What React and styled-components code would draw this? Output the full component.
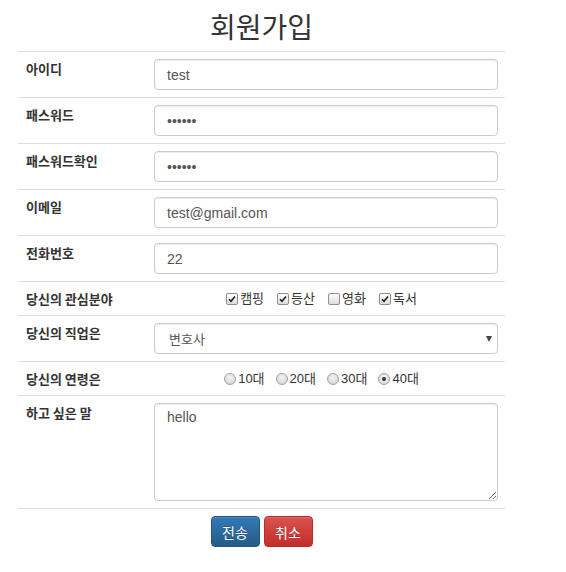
import React from "react";
import styled, { createGlobalStyle } from "styled-components";

const GlobalStyle = createGlobalStyle`
  body {
    margin: 0;
    background: #fff;
    color: #333;
    font-family: "Liberation Sans", "Noto Sans CJK KR", sans-serif;
    font-size: 14px;
  }
`;

const Page = styled.div`
  width: 487px;
  padding-left: 18px;
`;

const Title = styled.h2`
  margin: 0;
  height: 51px;
  padding-top: 3px;
  box-sizing: border-box;
  text-align: center;
  font-family: "Noto Sans CJK KR", sans-serif;
  font-weight: 400;
  font-size: 28px;
  line-height: 46px;
  color: #333;
`;

const Table = styled.table`
  width: 487px;
  border-collapse: collapse;
  border-spacing: 0;
  border-bottom: 1px solid #ddd;
`;

const Row = styled.tr`
  border-top: 1px solid #ddd;
`;

const Head = styled.th`
  width: 112px;
  padding: 7px 8px;
  text-align: left;
  vertical-align: top;
  font-family: "Noto Sans CJK KR", sans-serif;
  font-size: 13px;
  font-weight: 700;
  line-height: 19px;
  color: #333;
`;

const Cell = styled.td`
  padding: 7px 7px 7px 8px;
  vertical-align: top;
  text-align: ${(p) => (p.$center ? "center" : "left")};
`;

const fieldBase = `
  display: block;
  width: 100%;
  box-sizing: border-box;
  border: 1px solid #ccc;
  border-radius: 4px;
  box-shadow: inset 0 1px 1px rgba(0, 0, 0, 0.075);
  background: #fff;
  color: #555;
  font-family: "Liberation Sans", "Noto Sans CJK KR", sans-serif;
  font-size: 14px;
  outline: none;
  margin: 0;
`;

const Input = styled.input`
  ${fieldBase}
  height: 31px;
  padding: 0 12px;
  line-height: 20px;
`;

const SelectWrap = styled.div`
  position: relative;
`;

const Select = styled.select`
  ${fieldBase}
  height: 31px;
  padding: 0 12px 0 14px;
  appearance: none;
  -webkit-appearance: none;
  font-family: "Noto Sans CJK KR", sans-serif;
  font-size: 13px;
`;

const Caret = styled.span`
  position: absolute;
  right: 6px;
  top: 13px;
  width: 0;
  height: 0;
  border-left: 3.5px solid transparent;
  border-right: 3.5px solid transparent;
  border-top: 6px solid #444;
  pointer-events: none;
`;

const TextArea = styled.textarea`
  ${fieldBase}
  height: 98px;
  padding: 3px 12px;
  line-height: 20px;
  resize: both;
`;

const Choices = styled.div`
  display: flex;
  justify-content: center;
  gap: ${(p) => p.$gap}px;
  padding-right: 9px;
  line-height: 19px;
  font-family: "Liberation Sans", "Noto Sans CJK KR", sans-serif;
  font-size: 13px;
  color: #333;
`;

const Choice = styled.label`
  display: flex;
  align-items: center;
  gap: 2px;
`;

const Box = styled.span`
  display: inline-flex;
  align-items: center;
  justify-content: center;
  width: 10px;
  height: 10px;
  border: 1px solid #8f8f8f;
  border-radius: 2px;
  background: linear-gradient(#fdfdfd, #dcdcdc);
  box-sizing: content-box;
`;

const Radio = styled.span`
  display: inline-flex;
  align-items: center;
  justify-content: center;
  width: 10px;
  height: 10px;
  border: 1px solid #a3a3a3;
  border-radius: 50%;
  background: radial-gradient(circle at 50% 35%, #f4f4f4, #cfcfcf);
  &::after {
    content: "";
    width: 4px;
    height: 4px;
    border-radius: 50%;
    background: ${(p) => (p.$on ? "#333" : "transparent")};
  }
`;

const Actions = styled.div`
  display: flex;
  justify-content: center;
  gap: 4px;
  padding-top: 7px;
`;

const Button = styled.button`
  width: 49px;
  height: 31px;
  padding: 0;
  border-radius: 4px;
  border: 1px solid ${(p) => (p.$kind === "danger" ? "#b92c28" : "#245580")};
  background: ${(p) =>
    p.$kind === "danger"
      ? "linear-gradient(#d9534f, #c12e2a)"
      : "linear-gradient(#337ab7, #265a88)"};
  color: #fff;
  font-family: "Noto Sans CJK KR", sans-serif;
  font-size: 14px;
  text-shadow: 0 -1px 0 rgba(0, 0, 0, 0.2);
  box-shadow: inset 0 1px 0 rgba(255, 255, 255, 0.15);
`;

const Check = () => (
  <svg width="8" height="8" viewBox="0 0 8 8">
    <path d="M1 4.2 L3 6.3 L7 1.5" fill="none" stroke="#222" strokeWidth="1.6" />
  </svg>
);

const interests = [
  { label: "캠핑", on: true },
  { label: "등산", on: true },
  { label: "영화", on: false },
  { label: "독서", on: true },
];

const ages = ["10대", "20대", "30대", "40대"];

export default function App() {
  return (
    <Page>
      <GlobalStyle />
      <Title>회원가입</Title>
      <Table>
        <tbody>
          <Row>
            <Head>아이디</Head>
            <Cell>
              <Input type="text" defaultValue="test" />
            </Cell>
          </Row>
          <Row>
            <Head>패스워드</Head>
            <Cell>
              <Input type="password" defaultValue="123456" />
            </Cell>
          </Row>
          <Row>
            <Head>패스워드확인</Head>
            <Cell>
              <Input type="password" defaultValue="123456" />
            </Cell>
          </Row>
          <Row>
            <Head>이메일</Head>
            <Cell>
              <Input type="text" defaultValue="test@gmail.com" />
            </Cell>
          </Row>
          <Row>
            <Head>전화번호</Head>
            <Cell>
              <Input type="text" defaultValue="22" />
            </Cell>
          </Row>
          <Row>
            <Head>당신의 관심분야</Head>
            <Cell $center>
              <Choices $gap={13}>
                {interests.map((it) => (
                  <Choice key={it.label}>
                    <Box>{it.on && <Check />}</Box>
                    {it.label}
                  </Choice>
                ))}
              </Choices>
            </Cell>
          </Row>
          <Row>
            <Head>당신의 직업은</Head>
            <Cell>
              <SelectWrap>
                <Select defaultValue="변호사">
                  <option>변호사</option>
                  <option>의사</option>
                  <option>교사</option>
                </Select>
                <Caret />
              </SelectWrap>
            </Cell>
          </Row>
          <Row>
            <Head>당신의 연령은</Head>
            <Cell $center>
              <Choices $gap={11}>
                {ages.map((a) => (
                  <Choice key={a}>
                    <Radio $on={a === "40대"} />
                    {a}
                  </Choice>
                ))}
              </Choices>
            </Cell>
          </Row>
          <Row>
            <Head>하고 싶은 말</Head>
            <Cell>
              <TextArea defaultValue="hello" />
            </Cell>
          </Row>
        </tbody>
      </Table>
      <Actions>
        <Button $kind="primary">전송</Button>
        <Button $kind="danger">취소</Button>
      </Actions>
    </Page>
  );
}
